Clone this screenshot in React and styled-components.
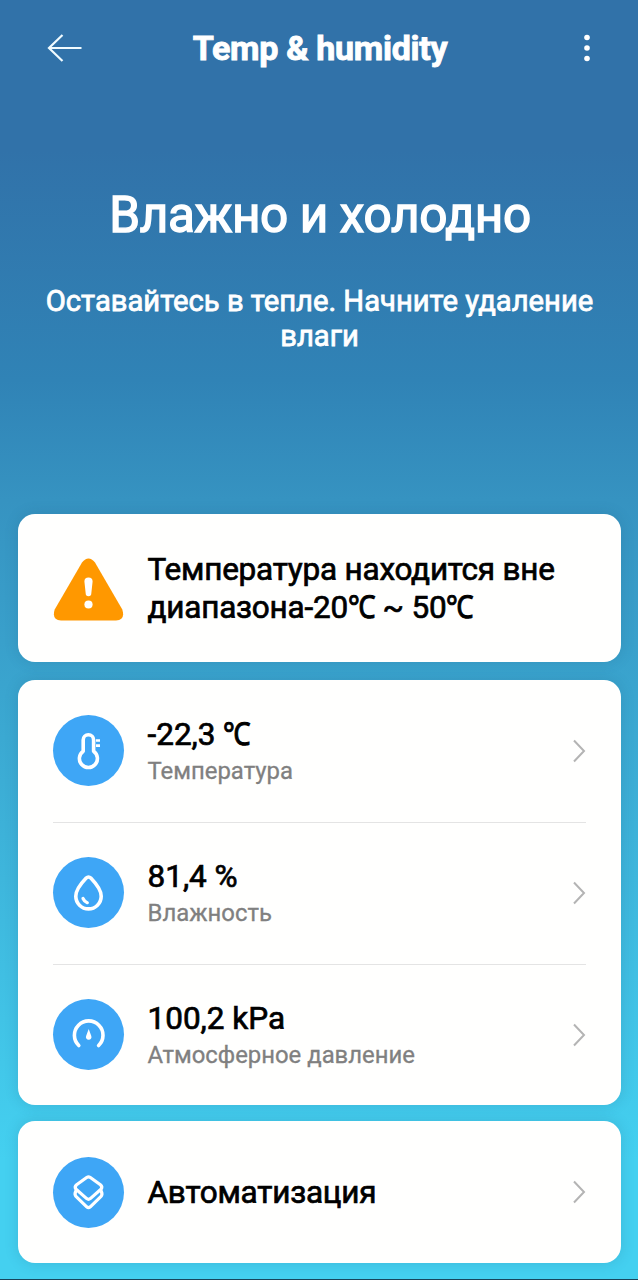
import React from "react";
import styled, { createGlobalStyle } from "styled-components";

const GlobalStyle = createGlobalStyle`
  * { box-sizing: border-box; }
  body { margin: 0; background: #44d0f0; }
`;

const Screen = styled.div`
  display: flex;
  flex-direction: column;
  width: 638px;
  height: 1280px;
  overflow: hidden;
  border-bottom: 1px solid #17455c;
  background: linear-gradient(180deg, #3172a9 0, #3172a9 150px, #3083b6 380px, #3693c1 500px, #44d0f0 1160px, #44d0f0 100%);
  font-family: Roboto, "Noto Sans", sans-serif;
  color: #000;
`;

const TopBar = styled.header`
  display: grid;
  grid-template-columns: 1fr auto 1fr;
  align-items: center;
  height: 96px;
  padding: 0 42px 0 46px;
`;

const IconButton = styled.button`
  display: flex;
  justify-self: ${(p) => p.$side};
  padding: 0;
  border: 0;
  background: none;
`;

const Title = styled.h1`
  margin: 0 2px 0 0;
  font-size: 34px;
  font-weight: 700;
  line-height: 40px;
  letter-spacing: -0.3px;
  -webkit-text-stroke: 0.9px #fff;
  color: #fff;
`;

const Summary = styled.section`
  height: 418px;
  padding-top: 89px;
  text-align: center;
  color: #fff;
`;

const Headline = styled.h2`
  margin: 0 0 0 2px;
  font-size: 49.5px;
  font-weight: 400;
  line-height: 60px;
  letter-spacing: -0.4px;
  -webkit-text-stroke: 1.4px #fff;
`;

const Advice = styled.p`
  margin: 39px 29px 0 30px;
  font-size: 29.2px;
  font-weight: 400;
  line-height: 35px;
  -webkit-text-stroke: 0.8px #fff;
`;

const Card = styled.section`
  flex: none;
  display: flex;
  flex-direction: column;
  height: ${(p) => p.$height}px;
  margin: 0 17.5px ${(p) => p.$gap || 0}px 18px;
  padding: 0 35px;
  border-radius: 17px;
  background: #fffffe;
  box-shadow: 0 0 14px rgba(30, 80, 110, 0.18);
`;

const Row = styled.div`
  flex: none;
  display: flex;
  align-items: center;
  height: ${(p) => p.$height || 142}px;
  padding-bottom: ${(p) => p.$inset || 0}px;
  box-shadow: ${(p) => (p.$divided ? "inset 0 1px #e4e4e4" : "none")};
`;

const Badge = styled.div`
  flex: none;
  display: flex;
  width: 71px;
  height: 71px;
  margin-right: 23.5px;
  border-radius: 50%;
  background: #3ea6f6;
`;

const AlertMark = styled(Badge)`
  border-radius: 0;
  background: none;
`;

const Copy = styled.div`
  flex: 1;
`;

const Value = styled.div`
  padding-top: ${(p) => (p.$tight ? "2px" : "1px")};
  font-size: 31.5px;
  font-weight: 400;
  line-height: 38px;
  letter-spacing: ${(p) => (p.$tight ? "-0.22px" : "0")};
  white-space: nowrap;
  -webkit-text-stroke: 0.7px #000;
`;

const Degree = styled.span`
  display: inline-block;
  margin-right: -4px;
  transform: scaleX(0.87);
  transform-origin: left center;
  -webkit-text-stroke: 1px #000;
`;

const Label = styled.div`
  font-size: 23.9px;
  line-height: 30px;
  margin-top: 2px;
  -webkit-text-stroke: 0.3px #808080;
  color: #808080;
`;

const stroke = { fill: "none", stroke: "#fff", strokeWidth: 3.6, strokeLinecap: "round", strokeLinejoin: "round" };

const Thermometer = () => (
  <svg width="71" height="71" viewBox="0 0 71 71">
    <path {...stroke} d="M30.2 36.2V25a5.200 5.200 0 0 1 10.400 0v11.200a9 9 0 1 1-10.400 0Z" />
    <path {...stroke} strokeWidth="2.6" strokeLinecap="butt" d="M43 25.500h4M43 30.600h4" />
  </svg>
);

const Drop = () => (
  <svg width="71" height="71" viewBox="0 0 71 71">
    <path {...stroke} d="M33.2 21.1C28.5 26 22.8 33 22.8 39.2a12.7 12.7 0 0 0 25.4 0C48.200 33 42.500 26 37.800 21.100Q35.500 18.800 33.200 21.100Z" />
    <path {...stroke} strokeWidth="3.2" d="M30 41.500Q31.400 44.700 34.300 45.700" />
  </svg>
);

const Gauge = () => (
  <svg width="71" height="71" viewBox="0 0 71 71">
    <path {...stroke} d="M25.800 46.500a14.300 14.300 0 1 1 19.800 0" />
    <path fill="#fff" d="M35.700 30l2.500 6.800a2.800 2.800 0 1 1-5 0Z" />
  </svg>
);

const Layers = () => (
  <svg width="71" height="71" viewBox="0 0 71 71">
    <path {...stroke} strokeWidth="3.2" d="M34 20.300Q35.500 19.300 37 20.300L47.400 27.800Q49.700 29.800 48.200 32L37.300 41.600Q35.500 43 33.700 41.600L22.800 32Q21.300 29.800 23.600 27.800Z" />
    <path {...stroke} strokeWidth="3.2" d="M22.600 34.500Q21.200 37.500 23.200 39.700L33.700 49.800Q35.500 51.400 37.300 49.800L47.800 39.700Q49.800 37.500 48.400 34.500" />
  </svg>
);

const Chevron = () => (
  <svg width="14" height="24" viewBox="0 0 14 24">
    <path d="M2 1.500 12 12 2 22.500" fill="none" stroke="#b4b4b4" strokeWidth="2" />
  </svg>
);

const readings = [
  { Icon: Thermometer, value: <>-22,3 <Degree>℃</Degree></>, label: "Температура", height: 142, inset: 1 },
  { Icon: Drop, value: "81,4 %", label: "Влажность", height: 142, inset: 1 },
  { Icon: Gauge, value: "100,2 kPa", label: "Атмосферное давление", height: 141, inset: 0 },
];

export default function App() {
  return (
    <>
      <GlobalStyle />
      <Screen>
        <TopBar>
          <IconButton $side="start" aria-label="Назад">
            <svg width="36" height="30" viewBox="0 0 36 30">
              <path d="M35.500 15H3M16.500 2 3 15l13.500 13" fill="none" stroke="#f0fbff" strokeWidth="2.200" />
            </svg>
          </IconButton>
          <Title>Temp &amp; humidity</Title>
          <IconButton $side="end" aria-label="Меню">
            <svg width="18" height="30" viewBox="0 0 18 30" fill="#fff">
              <circle cx="9" cy="4.500" r="2.800" />
              <circle cx="9" cy="15" r="2.800" />
              <circle cx="9" cy="25.500" r="2.800" />
            </svg>
          </IconButton>
        </TopBar>
        <Summary>
          <Headline>Влажно и холодно</Headline>
          <Advice>Оставайтесь в тепле. Начните удаление влаги</Advice>
        </Summary>
        <Card $height={148} $gap={18}>
          <Row $height={148}>
            <AlertMark>
              <svg width="71" height="71" viewBox="0 0 71 71">
                <path fill="#ff9800" d="M29 9.500Q35.500 1.500 42 9.500L69.300 56.500Q72.500 67 63 67.400H8Q-1.500 67 1.700 56.500Z" />
                <path fill="#fff" d="M31.400 28.500a4.100 4.100 0 0 1 8.200 0l-1.300 12a2.800 2.800 0 0 1-5.600 0Z" />
                <circle cx="35.500" cy="51.500" r="4.100" fill="#fff" />
              </svg>
            </AlertMark>
            <Copy>
              <Value $tight>
                Температура находится вне<br />
                диапазона-20<Degree>℃</Degree> ~ 50<Degree>℃</Degree>
              </Value>
            </Copy>
          </Row>
        </Card>
        <Card $height={425} $gap={16}>
          {readings.map(({ Icon, value, label, height, inset }, i) => (
            <Row key={label} $height={height} $inset={inset} $divided={i > 0}>
              <Badge><Icon /></Badge>
              <Copy>
                <Value>{value}</Value>
                <Label>{label}</Label>
              </Copy>
              <Chevron />
            </Row>
          ))}
        </Card>
        <Card $height={142}>
          <Row>
            <Badge><Layers /></Badge>
            <Copy><Value $tight>Автоматизация</Value></Copy>
            <Chevron />
          </Row>
        </Card>
      </Screen>
    </>
  );
}
